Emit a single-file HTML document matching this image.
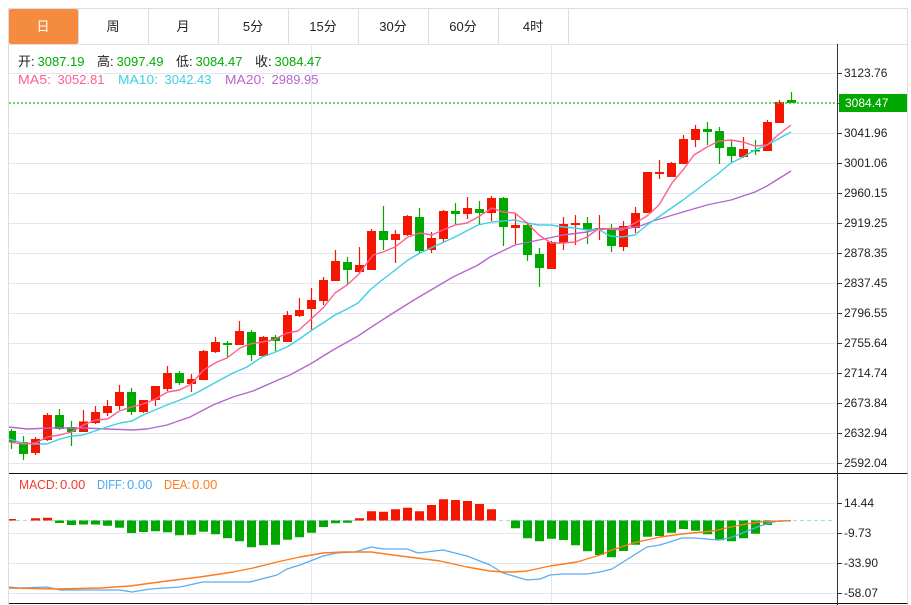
<!DOCTYPE html>
<html lang="zh">
<head>
<meta charset="utf-8">
<title>K线</title>
<style>
html,body{margin:0;padding:0;background:#fff;width:911px;height:605px;overflow:hidden}
svg{display:block;position:absolute;left:0;top:0}
text{font-family:"Liberation Sans","Noto Sans CJK SC",sans-serif;font-size:13px}
.ax{font-size:12px;fill:#222}
.tab{font-size:13px;fill:#222;text-anchor:middle}
</style>
</head>
<body>
<svg width="911" height="605" viewBox="0 0 911 605" xmlns="http://www.w3.org/2000/svg">
<defs><clipPath id="c"><rect x="9" y="44" width="828" height="560"/></clipPath></defs>

<!-- frame -->
<path d="M8.5 605V8.5H907.5V605" fill="none" stroke="#dcdee0" stroke-width="1"/>
<path d="M9 44.5H907.5" stroke="#e0e2e4"/>
<path d="M78.5 9V44M148.5 9V44M218.5 9V44M288.5 9V44M358.5 9V44M428.5 9V44M498.5 9V44M568.5 9V44" stroke="#dcdee0"/>

<!-- tabs -->
<rect x="9" y="9" width="69" height="35" rx="2" fill="#f48b3f"/>
<text class="tab" x="43" y="31" style="fill:#fff">日</text>
<text class="tab" x="113" y="31">周</text>
<text class="tab" x="183" y="31">月</text>
<text class="tab" x="253" y="31">5分</text>
<text class="tab" x="323" y="31">15分</text>
<text class="tab" x="393" y="31">30分</text>
<text class="tab" x="463" y="31">60分</text>
<text class="tab" x="533" y="31">4时</text>

<!-- grid -->
<path d="M9 73.5H837M9 133.5H837M9 163.5H837M9 193.5H837M9 223.5H837M9 253.5H837M9 283.5H837M9 313.5H837M9 343.5H837M9 373.5H837M9 403.5H837M9 433.5H837M9 463.5H837M9 503.5H837M9 533.5H837M9 563.5H837M9 593.5H837M311.5 44V473M551.5 44V473M311.5 474V603M551.5 474V603" stroke="#e1e7ed" fill="none"/>

<g clip-path="url(#c)">
<!-- red wicks -->
<path fill="none" stroke="#f41600" stroke-width="1.200" d="M35.5 437V455M47.5 413V441M83.5 410V432M95.5 406V424M107.5 400V416M119.5 385V410M143.5 400V413M155.5 386V406M167.5 366V391M191.5 374V392M203.5 350V380M215.5 337V353M239.5 321V345M263.5 336V357M287.5 311V342M299.5 298V317M311.5 288V331M323.5 277V305M335.5 250V281M359.5 247V274M371.5 229V270M395.5 230V263M407.5 215V236M431.5 232V253M443.5 210V243M467.5 197V219M491.5 196V221M515.5 214V244M551.5 241V269M563.5 217V250M575.5 215V245M599.5 215V240M623.5 221V251M635.5 207V233M647.5 172V213M659.5 160V179M671.5 162V177M683.5 135V164M695.5 125V147M743.5 137V158M767.5 120V151M779.5 100V123"/>
<!-- red bodies -->
<path fill="#f41600" d="M31 439h9v14h-9zM43 415h9v25h-9zM79 421.5h9v10.5h-9zM91 412h9v11h-9zM103 406h9v7h-9zM115 392h9v14h-9zM139 400h9v12h-9zM151 386h9v14h-9zM163 373h9v16h-9zM187 379h9v5h-9zM199 351h9v29h-9zM211 342h9v10h-9zM235 331h9v14h-9zM259 337h9v19h-9zM283 315h9v27h-9zM295 310h9v6h-9zM307 300h9v9h-9zM319 280h9v21h-9zM331 261h9v20h-9zM355 265h9v7h-9zM367 231h9v39h-9zM391 234h9v6h-9zM403 216h9v19h-9zM427 238h9v12h-9zM439 211h9v28h-9zM463 208h9v6h-9zM487 198h9v15h-9zM511 225h9v3h-9zM547 242h9v27h-9zM559 224h9v19h-9zM571 223h9v2h-9zM595 228h9v2h-9zM619 226h9v21h-9zM631 213h9v15h-9zM643 172h9v41h-9zM655 172h9v2h-9zM667 163h9v14h-9zM679 139h9v25h-9zM691 129h9v11h-9zM739 149h9v8h-9zM763 122h9v29h-9zM775 102h9v21h-9z"/>
<!-- green wicks -->
<path fill="none" stroke="#00a800" stroke-width="1.200" d="M11.5 429V449M23.5 436V460M59.5 409V430M71.5 421V446M131.5 388V415M179.5 371V385M227.5 341V357M251.5 330V361M275.5 335V351M347.5 257V285M383.5 206V250M419.5 208V254M455.5 203V224M479.5 201V225M503.5 197V246M527.5 222V261M539.5 248V287M587.5 217V244M611.5 224V252M707.5 122V145M719.5 127V164M731.5 140V162M755.5 140V155M791.5 92V103"/>
<!-- green bodies -->
<path fill="#00a800" d="M7 431h9v11h-9zM19 442h9v12h-9zM55 415h9v14h-9zM67 427h9v5h-9zM127 392h9v20h-9zM175 373h9v10h-9zM223 343h9v2h-9zM247 332h9v23h-9zM271 337h9v4h-9zM343 262h9v8h-9zM379 231h9v9h-9zM415 217h9v34h-9zM451 211h9v3h-9zM475 209h9v4h-9zM499 198h9v29h-9zM523 225h9v30h-9zM535 254h9v14h-9zM583 223h9v7h-9zM607 229h9v17h-9zM703 129h9v3h-9zM715 131h9v17h-9zM727 147h9v9h-9zM751 150h9v1.500h-9zM787 100h9v3h-9z"/>

<g fill="none" stroke-width="1.400" stroke-linejoin="round">
<!-- MA20 -->
<path stroke="#b765d0" d="M9 427L27 429L50 428L83 428L107 429L132 430L147 429L167 425L190 417L213 405L233 397L253 391L278 380L290 375L312 363L333 350L358 336L373 326L390 315L414 300L453 277L478 265L490 257L515 245L539 240L563 235L587 232L598 229L630 228L640 226L653 221L683 212L707 205L731 200L755 192L767 186L791 171"/>
<!-- MA10 -->
<path stroke="#3fcfe4" d="M9 439L23 443L33 444L47 444L60 439L72 436L83 435L95 431L107 427L120 423L132 421L143 415L155 410L167 405L180 400L192 395L200 391L220 380L233 373L247 367L262 357L273 353L287 347L298 340L312 330L323 323L335 315L347 309L358 303L370 290L382 280L390 274L408 260L420 253L455 237L478 225L492 222L515 220L527 223L539 225L551 225L563 227L575 228L587 230L598 229L610 236L622 237L635 235L647 225L660 216L683 200L707 182L719 173L731 163L743 157L755 150L767 145L778 139L791 132"/>
<!-- MA5 -->
<path stroke="#ff5f90" d="M9 442L23.500 444L35.500 443L47.500 437L59.500 435L71.500 432L83.500 425L95.500 420L107.500 419L119.500 411L131.500 407L143.500 404L155.500 399L167.500 392L179.500 390L191.500 384L203.500 370L217 362L227 358L240 348L250 344L262 342L273 340L287 333L298 331L310 320L323 308L335 293L347 285L358 275L373 255L383 252L395 247L408 237L420 233L432 235L443 230L455 225L467 223L478 217L492 208L503 212L515 213L527 223L539 235L551 243L563 243L575 242L587 237L598 229L610 229L622 230L635 223L647 216L659 205L672 183L683 170L694 155L707 147L719 141L731 140L743 142L755 146L767 145L778 135L791 125"/>
</g>

<!-- MACD zero line -->
<path d="M9 520.500H834" stroke="#a9dfe8" stroke-width="1.200" stroke-dasharray="4 3" fill="none"/>
<!-- MACD red -->
<path fill="#f41600" d="M9 520.500V519h7v1.500zM31 520.500V518.300h9V520.500zM43 520.500V517.700h9V520.500zM355 520.500V518.300h9V520.500zM367 520.500V511.300h9V520.500zM379 520.500V511.700h9V520.500zM391 520.500V509.300h9V520.500zM403 520.500V507.700h9V520.500zM415 520.500V511.300h9V520.500zM427 520.500V505h9V520.500zM439 520.500V499.300h9V520.500zM451 520.500V500h9V520.500zM463 520.500V501h9V520.500zM475 520.500V504h9V520.500zM487 520.500V509.300h9V520.500z"/>
<!-- MACD green -->
<path fill="#00a800" d="M55 520.500V523h9V520.500zM67 520.500V525h9V520.500zM79 520.500V524.500h9V520.500zM91 520.500V524.500h9V520.500zM103 520.500V525.700h9V520.500zM115 520.500V527.700h9V520.500zM127 520.500V533h9V520.500zM139 520.500V532h9V520.500zM151 520.500V531.300h9V520.500zM163 520.500V532.300h9V520.500zM175 520.500V535.300h9V520.500zM187 520.500V534.700h9V520.500zM199 520.500V531.700h9V520.500zM211 520.500V534.300h9V520.500zM223 520.500V538.300h9V520.500zM235 520.500V541.300h9V520.500zM247 520.500V547.300h9V520.500zM259 520.500V545.300h9V520.500zM271 520.500V544.700h9V520.500zM283 520.500V539.700h9V520.500zM295 520.500V537.300h9V520.500zM307 520.500V532.700h9V520.500zM319 520.500V527h9V520.500zM331 520.500V523.300h9V520.500zM343 520.500V522.700h9V520.500zM511 520.500V528.300h9V520.500zM523 520.500V538.300h9V520.500zM535 520.500V541.300h9V520.500zM547 520.500V538.700h9V520.500zM559 520.500V540h9V520.500zM571 520.500V545.300h9V520.500zM583 520.500V551.300h9V520.500zM595 520.500V555h9V520.500zM607 520.500V557.300h9V520.500zM619 520.500V551h9V520.500zM631 520.500V544.700h9V520.500zM643 520.500V536.700h9V520.500zM655 520.500V536h9V520.500zM667 520.500V532.700h9V520.500zM679 520.500V529h9V520.500zM691 520.500V530.700h9V520.500zM703 520.500V534.300h9V520.500zM715 520.500V540.300h9V520.500zM727 520.500V541.300h9V520.500zM739 520.500V538.300h9V520.500zM751 520.500V533.700h9V520.500zM763 520.500V525h9V520.500z"/>
<!-- DIFF -->
<path fill="none" stroke="#58aef2" stroke-width="1.300" stroke-linejoin="round" d="M9 587L20 588L47 587L60 590L83 590L120 590L132 592L150 589L180 587L203 582L250 582L277 575L287 569L300 565L323 556L337 553L355 552L371 547L383 549L407 549L418 553L443 550L467 556L490 565L503 573L527 580L540 579L550 575L563 574L587 574L600 572L612 569L647 547L660 545L682 538L695 538L718 540L730 538L760 526L777 521L791 520.700"/>
<!-- DEA -->
<path fill="none" stroke="#ff7b1c" stroke-width="1.400" stroke-linejoin="round" d="M9 588L57 589L100 588L130 586L167 581L200 577L233 572L253 568L277 562L300 557L323 553L343 552L371 552L393 555L440 561L467 567L490 571L503 572L513 572L527 571L550 566L577 562L600 555L612 550L633 543L660 537L682 534L713 531L740 525L760 522L791 520.700"/>
</g>

<!-- last price dotted line -->
<path d="M9 103H838" stroke="#35c935" stroke-width="1.500" stroke-dasharray="2 2" fill="none"/>

<!-- panel separators + axis -->
<path d="M9 473.500H907.500M9 603.500H907.500" stroke="#111" fill="none"/>
<path d="M837.500 44V605" stroke="#333" fill="none"/>
<path d="M838 73.500h4M838 103.500h4M838 133.500h4M838 163.500h4M838 193.500h4M838 223.500h4M838 253.500h4M838 283.500h4M838 313.500h4M838 343.500h4M838 373.500h4M838 403.500h4M838 433.500h4M838 463.500h4M838 503.500h4M838 533.500h4M838 563.500h4M838 593.500h4" stroke="#333" fill="none"/>

<!-- axis labels -->
<text class="ax" x="844" y="77">3123.76</text>
<text class="ax" x="844" y="137">3041.96</text>
<text class="ax" x="844" y="167">3001.06</text>
<text class="ax" x="844" y="197">2960.15</text>
<text class="ax" x="844" y="227">2919.25</text>
<text class="ax" x="844" y="257">2878.35</text>
<text class="ax" x="844" y="287">2837.45</text>
<text class="ax" x="844" y="317">2796.55</text>
<text class="ax" x="844" y="347">2755.64</text>
<text class="ax" x="844" y="377">2714.74</text>
<text class="ax" x="844" y="407">2673.84</text>
<text class="ax" x="844" y="437">2632.94</text>
<text class="ax" x="844" y="467">2592.04</text>
<text class="ax" x="844" y="507">14.44</text>
<text class="ax" x="844" y="537">-9.73</text>
<text class="ax" x="844" y="567">-33.90</text>
<text class="ax" x="844" y="597">-58.07</text>
<rect x="839" y="94" width="68" height="18" fill="#00a800"/>
<text class="ax" x="845" y="107" style="fill:#fff">3084.47</text>

<!-- OHLC legend -->
<text x="18" y="66" fill="#222">开:</text><text x="37.500" y="66" fill="#00ad00">3087.19</text>
<text x="97" y="66" fill="#222">高:</text><text x="116.500" y="66" fill="#00ad00">3097.49</text>
<text x="176" y="66" fill="#222">低:</text><text x="195.500" y="66" fill="#00ad00">3084.47</text>
<text x="255" y="66" fill="#222">收:</text><text x="274.500" y="66" fill="#00ad00">3084.47</text>

<text x="18" y="84" fill="#ff5f90" textLength="33" lengthAdjust="spacingAndGlyphs">MA5:</text><text x="57.500" y="84" fill="#ff5f90">3052.81</text>
<text x="118" y="84" fill="#3fcfe4" textLength="40" lengthAdjust="spacingAndGlyphs">MA10:</text><text x="164.500" y="84" fill="#3fcfe4">3042.43</text>
<text x="225" y="84" fill="#b765d0" textLength="40" lengthAdjust="spacingAndGlyphs">MA20:</text><text x="271.500" y="84" fill="#b765d0">2989.95</text>

<text x="19" y="489" fill="#f33a2a" textLength="39" lengthAdjust="spacingAndGlyphs">MACD:</text><text x="60" y="489" fill="#f33a2a">0.00</text>
<text x="97" y="489" fill="#4ea8f2" textLength="28" lengthAdjust="spacingAndGlyphs">DIFF:</text><text x="127" y="489" fill="#4ea8f2">0.00</text>
<text x="164" y="489" fill="#ff7b1c" textLength="26.500" lengthAdjust="spacingAndGlyphs">DEA:</text><text x="192" y="489" fill="#ff7b1c">0.00</text>
</svg>
</body>
</html>
